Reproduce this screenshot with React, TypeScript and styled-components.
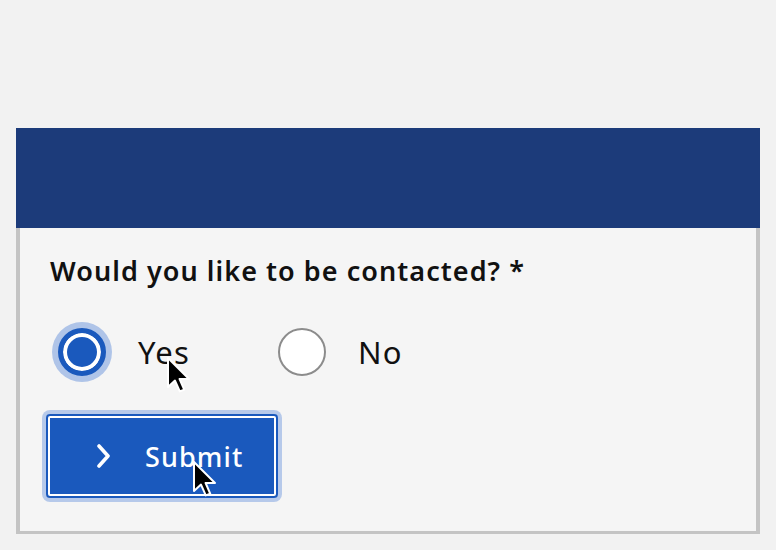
import React from "react";
import styled, { createGlobalStyle } from "styled-components";

const Global = createGlobalStyle`
  html, body { margin: 0; padding: 0; background: #f2f2f2; }
  body { font-family: "Noto Sans", "Open Sans", sans-serif; }
`;

const Page = styled.div`
  width: 776px;
  height: 550px;
  box-sizing: border-box;
  padding: 128px 16px 0 16px;
  overflow: hidden;
`;

const Card = styled.div`
  width: 744px;
  display: flex;
  flex-direction: column;
`;

const Header = styled.div`
  height: 100px;
  background: #1c3b7a;
`;

const Body = styled.div`
  background: #f5f5f5;
  border: 4px solid #c4c4c4;
  border-top: none;
  border-bottom-width: 3px;
  padding: 26px 30px 33px 30px;
  display: flex;
  flex-direction: column;
  align-items: flex-start;
`;

const Title = styled.div`
  font-size: 27px;
  font-weight: 600;
  line-height: 34px;
  color: #111;
  letter-spacing: 1.05px;
`;

const Options = styled.div`
  display: flex;
  align-items: center;
  margin-top: 34px;
  height: 60px;
`;

const Option = styled.label<{ $spaceAfter?: number }>`
  display: flex;
  align-items: center;
  gap: 32px;
  margin-right: ${(p) => p.$spaceAfter ?? 0}px;
  position: relative;
  font-size: 31px;
  color: #111;
  letter-spacing: 1.2px;
`;

const Radio = styled.span<{ $checked?: boolean }>`
  width: 48px;
  height: 48px;
  box-sizing: border-box;
  border-radius: 50%;
  margin-left: ${(p) => (p.$checked ? "8px" : "0")};
  border: ${(p) => (p.$checked ? "5px solid #1a59bd" : "2px solid #8c8c8c")};
  background: ${(p) => (p.$checked ? "#1a59bd" : "#ffffff")};
  box-shadow: ${(p) =>
    p.$checked
      ? "inset 0 0 0 4px #ffffff, 0 0 0 6px #afc4e8"
      : "none"};
`;

const Submit = styled.button`
  margin-top: 32px;
  margin-left: -4px;
  width: 232px;
  height: 84px;
  box-sizing: border-box;
  background: #1a59bd;
  border: none;
  border-radius: 4px;
  box-shadow: inset 0 0 0 2px #1a59bd, inset 0 0 0 4px #ffffff,
    0 0 0 4px #b6c9ea;
  color: #fff;
  font-family: "Noto Sans", "Open Sans", sans-serif;
  font-size: 27px;
  font-weight: 500;
  letter-spacing: 1.1px;
  display: flex;
  align-items: center;
  padding: 0 0 0 50px;
  gap: 33px;
  position: relative;
`;

const Cursor = styled.svg<{ $x: number; $y: number }>`
  position: absolute;
  left: ${(p) => p.$x}px;
  top: ${(p) => p.$y}px;
  pointer-events: none;
`;

const Arrow = ({ x, y }: { x: number; y: number }) => (
  <Cursor $x={x} $y={y} width="24" height="36" viewBox="0 0 12 18">
    <path
      d="M0.5 0.5 L0.5 15 L4 11.8 L6.4 17.2 L8.6 16.3 L6.3 11 L11 11 Z"
      fill="#000"
      stroke="#fff"
      strokeWidth="1"
      strokeLinejoin="round"
    />
  </Cursor>
);

export default function App() {
  return (
    <>
      <Global />
      <Page>
        <Card>
          <Header />
          <Body>
            <Title>Would you like to be contacted? *</Title>
            <Options>
              <Option $spaceAfter={88}>
                <Radio $checked />
                Yes
                <Arrow x={117} y={29} />
              </Option>
              <Option>
                <Radio />
                No
              </Option>
            </Options>
            <Submit>
              <svg width="16" height="24" viewBox="0 0 16 24">
                <path
                  d="M3 2 L12 12 L3 22"
                  fill="none"
                  stroke="#fff"
                  strokeWidth="3.6"
                  strokeLinecap="round"
                  strokeLinejoin="round"
                />
              </svg>
              Submit
              <Arrow x={147} y={47} />
            </Submit>
          </Body>
        </Card>
      </Page>
    </>
  );
}
